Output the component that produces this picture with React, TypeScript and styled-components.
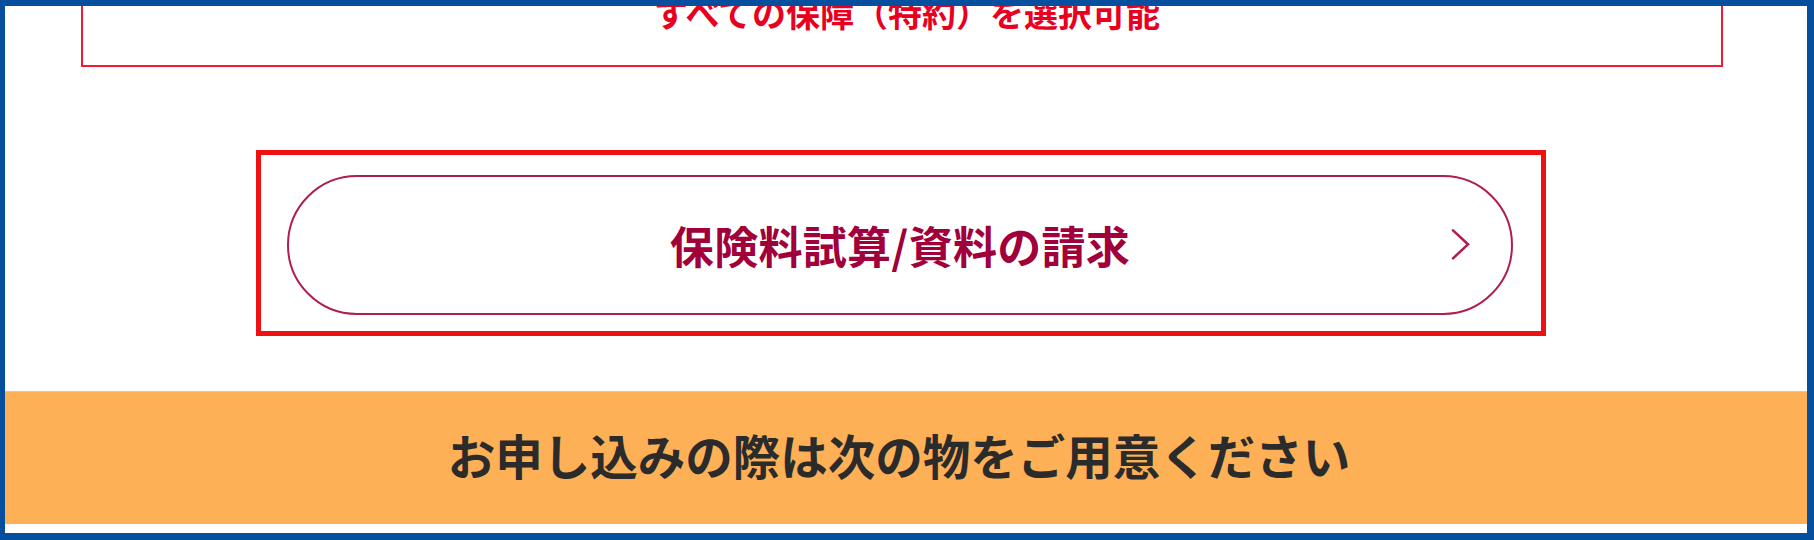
import React from "react";
import styled, { createGlobalStyle } from "styled-components";

const Global = createGlobalStyle`
  html, body { margin: 0; padding: 0; background: #ffffff; }
  body { font-family: "Noto Sans CJK JP", "Noto Sans", sans-serif; }
  * { box-sizing: border-box; }
`;

const Frame = styled.div`
  width: 1814px;
  height: 540px;
  border-style: solid;
  border-color: #064f9f;
  border-width: 6px 7px 7px 5px;
  overflow: hidden;
  display: flex;
  flex-direction: column;
  background: #ffffff;
`;

const FeatureBox = styled.section`
  margin: -10px 84px 0 76px;
  border: 2px solid #f01b32;
  border-top: none;
  padding: 0 0 35px;
  display: flex;
  justify-content: center;
`;

const FeatureText = styled.p`
  margin: 0;
  font-size: 34px;
  line-height: 34px;
  font-weight: 700;
  color: #e9001f;
  padding-left: 10px;
`;

const Highlight = styled.div`
  margin: 83px 0 0 251px;
  width: 1290px;
  height: 186px;
  border: 5px solid #ee1111;
  padding: 20px 0 0 26px;
`;

const PillButton = styled.a`
  width: 1226px;
  height: 140px;
  border: 2px solid #b01e50;
  border-radius: 70px;
  display: flex;
  align-items: center;
  justify-content: center;
  position: relative;
  text-decoration: none;
  color: #a1003b;
  font-size: 44px;
  font-weight: 700;
  letter-spacing: 0.3px;
  cursor: pointer;
`;

const Chevron = styled.svg`
  position: absolute;
  right: 38px;
  top: 50%;
  transform: translateY(-52%);
`;

const NoticeBand = styled.div`
  margin-top: 55px;
  height: 133px;
  background: #fdb056;
  border-top: 1px solid #fdc07c;
  display: flex;
  align-items: center;
  justify-content: center;
`;

const NoticeText = styled.h2`
  margin: 0;
  font-size: 47.5px;
  font-weight: 700;
  color: #2b2b2b;
  line-height: 1;
  padding: 0 14px 6px 0;
`;

export default function App() {
  return (
    <>
      <Global />
      <Frame>
        <FeatureBox>
          <FeatureText>すべての保障（特約）を選択可能</FeatureText>
        </FeatureBox>
        <Highlight>
          <PillButton>
            保険料試算/資料の請求
            <Chevron width="24" height="32" viewBox="0 0 24 32" fill="none">
              <polyline
                points="4,2 19,16 4,30"
                stroke="#b01e50"
                strokeWidth="2.6"
                strokeLinecap="round"
                strokeLinejoin="miter"
              />
            </Chevron>
          </PillButton>
        </Highlight>
        <NoticeBand>
          <NoticeText>お申し込みの際は次の物をご用意ください</NoticeText>
        </NoticeBand>
      </Frame>
    </>
  );
}
